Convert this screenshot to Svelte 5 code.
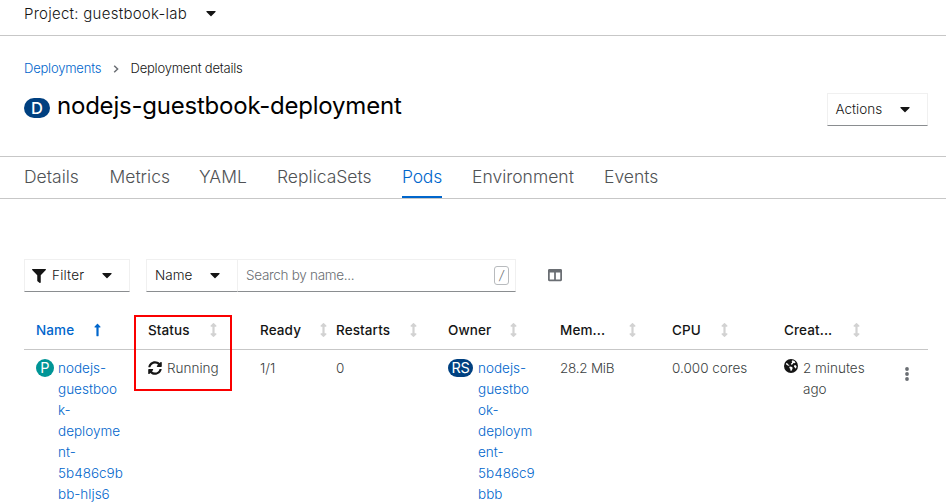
<script>
  const tabs = [
    { label: 'Details', width: 55.5 },
    { label: 'Metrics', width: 59.5 },
    { label: 'YAML', width: 48 },
    { label: 'ReplicaSets', width: 95 },
    { label: 'Pods', width: 40 },
    { label: 'Environment', width: 102 },
    { label: 'Events', width: 56 },
  ];
  const active = 'Pods';
  const columns = [
    { label: 'Name', arrow: 58.3 },
    { label: 'Status', arrow: 62.2 },
    { label: 'Ready', arrow: 60.2 },
    { label: 'Restarts', arrow: 74.2 },
    { label: 'Owner', arrow: 62.2 },
    { label: 'Mem...', arrow: 69.2 },
    { label: 'CPU', arrow: 49.2 },
    { label: 'Creat...', arrow: 69.2 },
  ];
  const podName = ['nodejs-', 'guestboo', 'k-', 'deployme', 'nt-', '5b486c9b', 'bb-hljs6'];
  const ownerName = ['nodejs-', 'guestbo', 'ok-', 'deploym', 'ent-', '5b486c9', 'bbb'];
</script>

{#snippet caret()}
  <svg class="caret" viewBox="0 0 320 512"><path d="M31.3 192h257.3c17.8 0 26.7 21.5 14.1 34.1L174.1 354.8c-7.8 7.8-20.5 7.8-28.3 0L17.2 226.1C4.6 213.5 13.5 192 31.3 192z" /></svg>
{/snippet}

<div class="page">
  <div class="project"><span class="project-name">Project: guestbook-lab</span>{@render caret()}</div>

  <header>
    <nav class="crumbs">
      <a href="#deployments">Deployments</a>
      <svg viewBox="0 0 6 8"><path d="M1.2 .8 4.6 4 1.2 7.2" /></svg>
      <span>Deployment details</span>
    </nav>
    <div class="heading">
      <span class="badge big">D</span>
      <h1>nodejs-guestbook-deployment</h1>
      <button class="actions"><span>Actions</span>{@render caret()}</button>
    </div>
  </header>

  <div class="tabs">
    {#each tabs as tab}
      <div class="tab" class:active={tab.label === active} style="width: {tab.width}px"><span>{tab.label}</span></div>
    {/each}
  </div>

  <div class="toolbar">
    <button class="filter">
      <svg class="funnel" viewBox="0 0 512 512"><path d="M487.976 0H24.028C2.71 0-8.047 25.866 7.058 40.971L192 225.941V432c0 7.831 3.821 15.17 10.237 19.662l80 55.98C298.02 518.69 320 507.493 320 487.98V225.941l184.947-184.97C520.021 25.896 509.338 0 487.976 0z" /></svg>
      <span>Filter</span>{@render caret()}
    </button>
    <button class="by"><span>Name</span>{@render caret()}</button>
    <div class="search"><span>Search by name...</span><kbd>/</kbd></div>
    <svg class="manage" viewBox="0 0 512 512"><path d="M464 32H48C21.49 32 0 53.49 0 80v352c0 26.51 21.49 48 48 48h416c26.51 0 48-21.49 48-48V80c0-26.51-21.49-48-48-48zM224 416H64V160h160v256zm224 0H288V160h160v256z" /></svg>
  </div>

  <div class="table">
    <div class="row head">
      {#each columns as c, i}
        <div class="th" class:sorted={i === 0}>
          <span style="width: {c.arrow}px">{c.label}</span>
          {#if i === 0}
            <svg viewBox="0 0 256 512"><path d="M88 166.059V468c0 6.627 5.373 12 12 12h56c6.627 0 12-5.373 12-12V166.059h46.059c21.382 0 32.09-25.851 16.971-40.971l-86.059-86.059c-9.373-9.373-24.569-9.373-33.941 0l-86.059 86.059c-15.119 15.119-4.411 40.971 16.971 40.971H88z" /></svg>
          {:else}
            <svg viewBox="0 0 256 512"><path d="M214.059 377.941H168V134.059h46.059c21.382 0 32.09-25.851 16.971-40.971L144.971 7.029c-9.373-9.373-24.568-9.373-33.941 0L24.971 93.088c-15.119 15.119-4.411 40.971 16.971 40.971H88v243.882H41.941c-21.382 0-32.09 25.851-16.971 40.971l86.059 86.059c9.373 9.373 24.568 9.373 33.941 0l86.059-86.059c15.12-15.119 4.412-40.971-16.97-40.971z" /></svg>
          {/if}
        </div>
      {/each}
    </div>
    <div class="row body">
      <div class="cell">
        <span class="badge pod">P</span>
        <a href="#pod">{#each podName as part}{part}<br />{/each}</a>
      </div>
      <div class="cell">
        <svg class="sync" viewBox="0 0 512 512"><path d="M370.72 133.28C339.458 104.008 298.888 87.962 255.848 88c-77.458.068-144.328 53.178-162.791 126.85-1.344 5.363-6.122 9.15-11.651 9.15H24.103c-7.498 0-13.194-6.807-11.807-14.176C33.933 94.924 134.813 8 256 8c66.448 0 126.791 26.136 171.315 68.685L463.03 40.97C478.149 25.851 504 36.559 504 57.941V192c0 13.255-10.745 24-24 24H345.941c-21.382 0-32.09-25.851-16.971-40.971l41.75-41.749zM32 296h134.059c21.382 0 32.09 25.851 16.971 40.971l-41.75 41.75c31.262 29.273 71.835 45.319 114.876 45.28 77.418-.07 144.315-53.144 162.787-126.849 1.344-5.363 6.122-9.15 11.651-9.15h57.304c7.498 0 13.194 6.807 11.807 14.176C478.067 417.076 377.187 504 256 504c-66.448 0-126.791-26.136-171.315-68.685L48.97 471.03C33.851 486.149 8 475.441 8 454.059V320c0-13.255 10.745-24 24-24z" /></svg>
        <span>Running</span>
      </div>
      <div class="cell">1/1</div>
      <div class="cell">0</div>
      <div class="cell">
        <span class="badge rs">RS</span>
        <a href="#owner">{#each ownerName as part}{part}<br />{/each}</a>
      </div>
      <div class="cell memory">28.2 MiB</div>
      <div class="cell">0.000 cores</div>
      <div class="cell">
        <svg class="globe" viewBox="0 0 14 14">
          <circle cx="7" cy="7" r="7" />
          <path class="land" d="M8.6 1.2 10.4 1.9l1.2 1.5-1.3.9-1-.2-.6 1.2-1.6.5-.3-1 1.2-1 .1-1-.6-.6zM2 3.9l1.6.7.5 1 1.4.3-.5.9-1.3-.2-1.5-1.2zM5.6 7.4l1.9.3 1.2 1-.4 1.5-1 1.9-.9-.6-.1-1.7-1-.9zM10.3 6.2l1.5.1.8 1.2-.5 1.5-.9.5-.6-1.3-.7-.7z" />
        </svg>
        <span>2 minutes<br />ago</span>
      </div>
      <svg class="kebab" viewBox="0 0 4 14"><circle cx="2" cy="2" r="1.9" /><circle cx="2" cy="7" r="1.9" /><circle cx="2" cy="12" r="1.9" /></svg>
    </div>
    <div class="highlight"></div>
  </div>
</div>

<style>
  :global(body) { background: #fff; overflow: hidden; }
  .page {
    width: 946px; height: 504px; overflow: hidden; box-sizing: border-box;
    font-family: Inter, "Open Sans", sans-serif; font-weight: 300; font-size: 13.5px; color: #151515;
  }
  svg { display: block; flex: none; fill: currentColor; }
  a { color: #0066cc; text-decoration: none; }
  button { font: inherit; color: inherit; background: none; padding: 0; margin: 0; text-align: left; }
  .caret { width: 10px; height: 16px; }
  .project {
    height: 35px; box-sizing: content-box; border-bottom: 1px solid #c7c7c7;
    padding-left: 24px; display: flex; align-items: flex-start; font-size: 15px; line-height: 27px;
  }
  .project-name { width: 182px; letter-spacing: 0.26px; white-space: nowrap; }
  .project .caret { margin-top: 5px; }
  header { height: 120px; box-sizing: border-box; padding: 22px 18px 0 24px; }
  .crumbs { display: flex; align-items: center; height: 21px; font-size: 13px; letter-spacing: -0.2px; line-height: 20px; }
  .crumbs a, .crumbs span { padding-bottom: 1px; }
  .crumbs a { width: 89px; }
  .crumbs svg { width: 6px; height: 8px; fill: none; stroke: #6a6e73; stroke-width: 1.5; margin-right: 11.5px; }
  .heading { display: flex; align-items: flex-start; }
  .badge {
    display: block; flex: none; box-sizing: border-box; text-align: center; color: #fff;
    border-radius: 10px; background: #004080; font-weight: 400;
  }
  .big { width: 26px; height: 20px; line-height: 20px; font-size: 16.5px; margin-top: 19px; font-weight: 500; }
  h1 {
    flex: 1; font-weight: 400; font-size: 24px; line-height: 32px; letter-spacing: -0.22px;
    margin: 11px 0 0 7px; color: #000; white-space: nowrap;
  }
  .actions {
    flex: none; box-sizing: border-box; width: 101px; height: 33px; margin-top: 14px; padding: 0 0 0 7.5px; display: flex; align-items: center;
    border: 1px solid #f0f0f0; border-bottom-color: #8a8d90;
  }
  .actions span { width: 64.5px; }
  .tabs {
    height: 41px; border-top: 1px solid #c7c7c7; border-bottom: 1px solid #c7c7c7; padding-left: 24px;
    display: flex; gap: 30px; color: #4f5255; font-size: 17.5px;
  }
  .tab { height: 39px; line-height: 40px; white-space: nowrap; border-bottom: 2px solid transparent; flex: none; }
  .tab.active { color: #0066cc; border-color: #0066cc; }
  .tab.active span { letter-spacing: -0.2px; }
  .toolbar { display: flex; padding: 60px 0 0 24px; height: 33px; align-items: stretch; }
  .toolbar button, .search { box-sizing: border-box; height: 33px; border: 1px solid #f0f0f0; border-bottom-color: #8a8d90; display: flex; align-items: center; }
  .toolbar .caret, .actions .caret { margin-top: -1px; }
  .actions span, .toolbar span { padding-bottom: 2px; }
  .filter { width: 106px; padding-left: 7px; margin-right: 16px; }
  .funnel { width: 14px; height: 14px; margin-right: 6px; }
  .toolbar .filter span { width: 50px; letter-spacing: 0.2px; }
  .toolbar .by { width: 91px; padding-left: 8px; border-right: 0; }
  .by span { width: 55px; }
  .search { width: 279px; padding: 0 6px 0 8px; justify-content: space-between; color: #6a6e73; }
  .search span { letter-spacing: -0.3px; }
  kbd { box-sizing: border-box; width: 15px; height: 19px; border: 1px solid #b8bbbe; border-radius: 3px; font: italic 300 13px/17px Inter, sans-serif; text-align: center; margin-bottom: 1px; }
  .manage { width: 14px; height: 14px; margin: 9px 0 0 32px; color: #6a6e73; }
  .table { position: relative; margin: 18px 18px 0 24px; }
  .row { display: grid; grid-template-columns: 112px 112px 76px 112px 112px 112px 112px 116px auto; padding-left: 12px; }
  .head { height: 39px; border-bottom: 1px solid #c7c7c7; font-weight: 500; letter-spacing: 0.1px; }
  .th { display: flex; align-items: center; height: 39px; }
  .th span { white-space: nowrap; flex: none; }
  .th svg { width: 7px; height: 14px; color: #d2d2d2; }
  .th.sorted, .th.sorted svg { color: #0066cc; }
  .body { padding-top: 8px; line-height: 21px; color: #3c3f42; }
  .cell { display: flex; align-items: flex-start; white-space: nowrap; }
  .memory { letter-spacing: -0.25px; }
  .pod, .rs { height: 18px; line-height: 18px; font-size: 14.5px; margin-top: 1px; }
  .pod { width: 18px; background: #009596; margin-right: 4px; }
  .rs { width: 25px; margin-right: 5px; letter-spacing: -0.4px; }
  .sync { width: 14px; height: 14px; margin: 3px 5px 0 0; color: #151515; }
  .globe { width: 14px; height: 14px; margin: 1px 5px 0 0; color: #151515; }
  .globe .land { fill: #fff; }
  .kebab { width: 4px; height: 14px; margin: 9px 0 0 5px; color: #6a6e73; }
  .highlight { position: absolute; left: 110px; top: 5px; width: 94px; height: 72px; border: 2px solid #fa0000; }
</style>
